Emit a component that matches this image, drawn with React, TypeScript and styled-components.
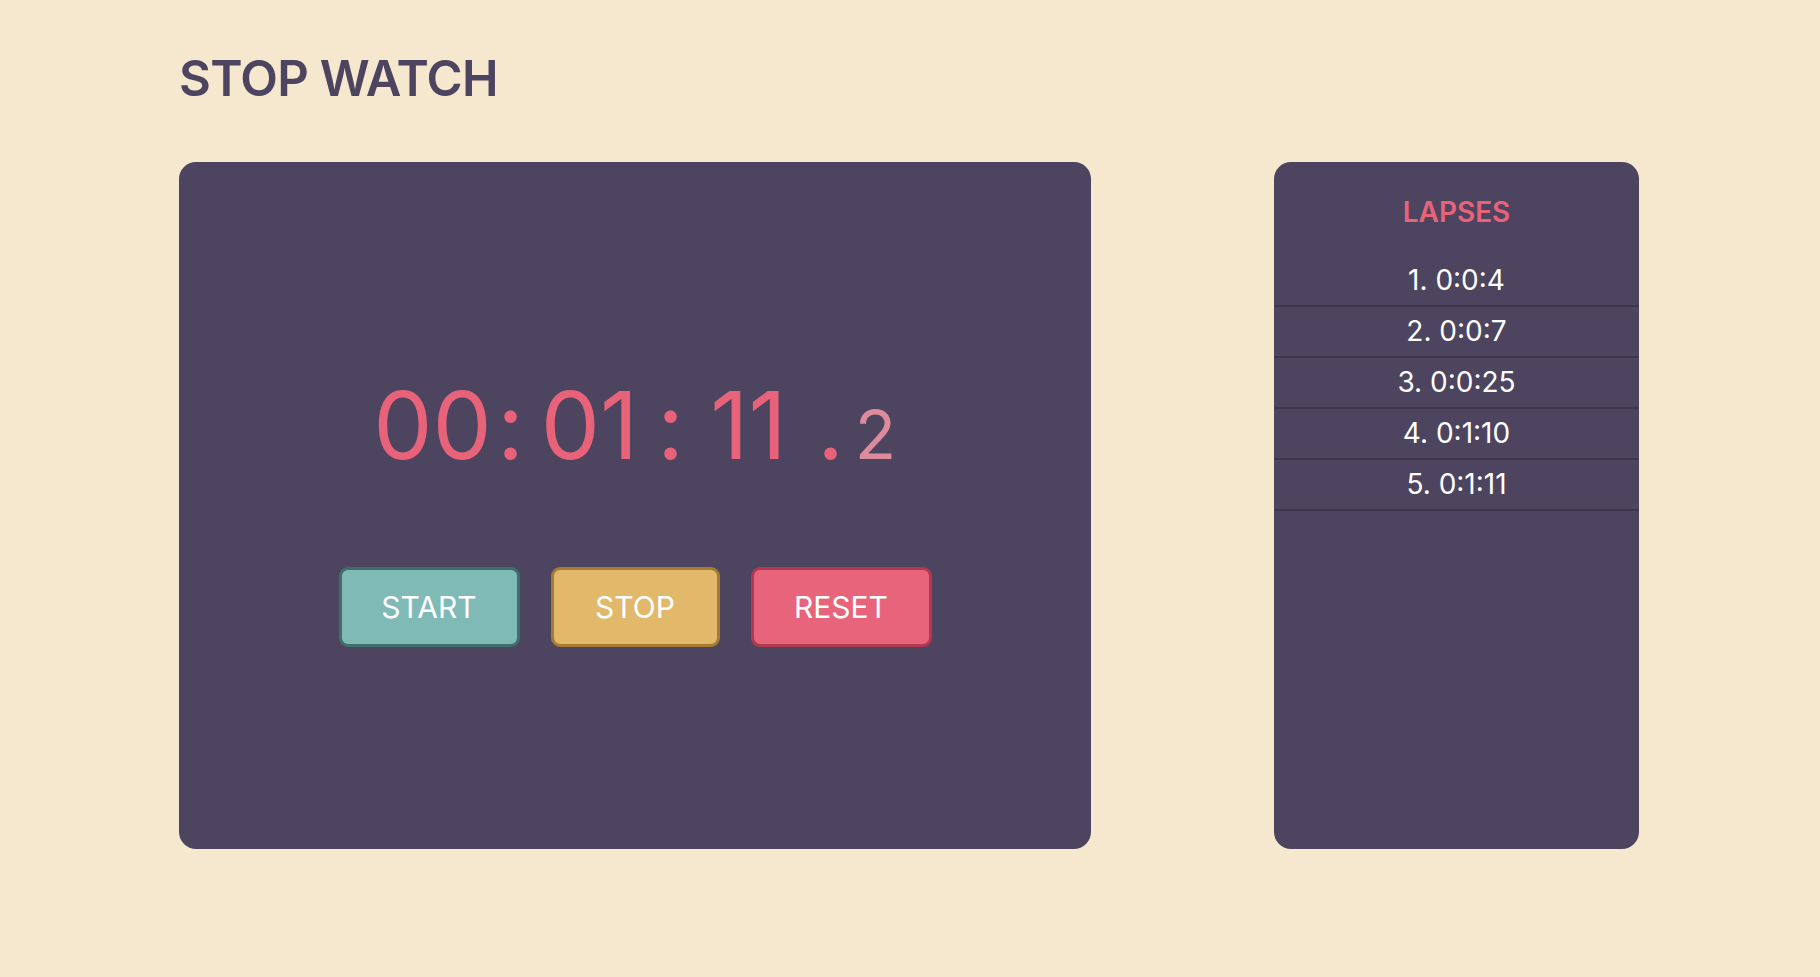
import React from "react";
import styled, { createGlobalStyle } from "styled-components";

const GlobalStyle = createGlobalStyle`
  html, body {
    margin: 0;
    padding: 0;
    background: #f5e8cf;
    font-family: Inter, "Noto Sans", sans-serif;
  }
  * { box-sizing: border-box; }
`;

const Page = styled.div`
  width: 1460px;
  margin-left: 179px;
  padding-top: 49px;
`;

const Title = styled.h1`
  margin: 0;
  font-size: 49px;
  line-height: 59px;
  font-weight: 600;
  color: #4d4560;
  letter-spacing: -0.7px;
`;

const Row = styled.div`
  display: flex;
  justify-content: space-between;
  margin-top: 54px;
`;

const MainCard = styled.section`
  width: 912px;
  height: 687px;
  background: #4d4560;
  border-radius: 17px;
  display: flex;
  flex-direction: column;
  align-items: center;
  padding-top: 216px;
`;

const Timer = styled.div`
  display: flex;
  align-items: baseline;
  color: #e8637a;
  font-size: 94px;
  line-height: 94px;
  font-weight: 400;
  margin-left: -1px;
`;

const Seg = styled.span<{ $w: number }>`
  display: flex;
  justify-content: center;
  width: ${(p) => p.$w}px;
  white-space: nowrap;
`;

const Small = styled(Seg)`
  font-size: 68px;
  line-height: 68px;
  color: #db8b9c;
`;

const Buttons = styled.div`
  display: flex;
  gap: 31px;
  margin-top: 95px;
`;

const Button = styled.button<{ $bg: string; $border: string; $w: number }>`
  width: ${(p) => p.$w}px;
  height: 80px;
  background: ${(p) => p.$bg};
  border: 3px solid ${(p) => p.$border};
  border-radius: 9px;
  color: #ffffff;
  font-family: Inter, "Noto Sans", sans-serif;
  font-size: 30px;
  font-weight: 400;
  cursor: pointer;
  padding: 0;
`;

const LapCard = styled.aside`
  width: 365px;
  height: 687px;
  background: #4d4560;
  border-radius: 17px;
  padding-top: 36px;
  display: flex;
  flex-direction: column;
`;

const LapTitle = styled.h2`
  margin: 0;
  text-align: center;
  font-size: 28px;
  line-height: 28px;
  font-weight: 600;
  color: #e8637a;
`;

const LapList = styled.ol`
  list-style: none;
  margin: 30px 0 0;
  padding: 0;
`;

const LapItem = styled.li`
  height: 51px;
  line-height: 49px;
  border-bottom: 2px solid #3e364c;
  text-align: center;
  color: #ffffff;
  font-size: 28px;
  font-weight: 400;
`;

const laps = ["0:0:4", "0:0:7", "0:0:25", "0:1:10", "0:1:11"];

export default function App() {
  return (
    <>
      <GlobalStyle />
      <Page>
        <Title>STOP WATCH</Title>
        <Row>
          <MainCard>
            <Timer>
              <Seg $w={100}>00</Seg>
              <Seg $w={56}>:</Seg>
              <Seg $w={102}>01</Seg>
              <Seg $w={60}>:</Seg>
              <Seg $w={96}>11</Seg>
              <Seg $w={68}>.</Seg>
              <Small $w={22}>2</Small>
            </Timer>
            <Buttons>
              <Button $bg="#7fbab6" $border="#3f6e6b" $w={181}>START</Button>
              <Button $bg="#e2b96b" $border="#a57b33" $w={169}>STOP</Button>
              <Button $bg="#e8647a" $border="#b03a4f" $w={181}>RESET</Button>
            </Buttons>
          </MainCard>
          <LapCard>
            <LapTitle>LAPSES</LapTitle>
            <LapList>
              {laps.map((l, i) => (
                <LapItem key={i}>
                  {i + 1}. {l}
                </LapItem>
              ))}
            </LapList>
          </LapCard>
        </Row>
      </Page>
    </>
  );
}
